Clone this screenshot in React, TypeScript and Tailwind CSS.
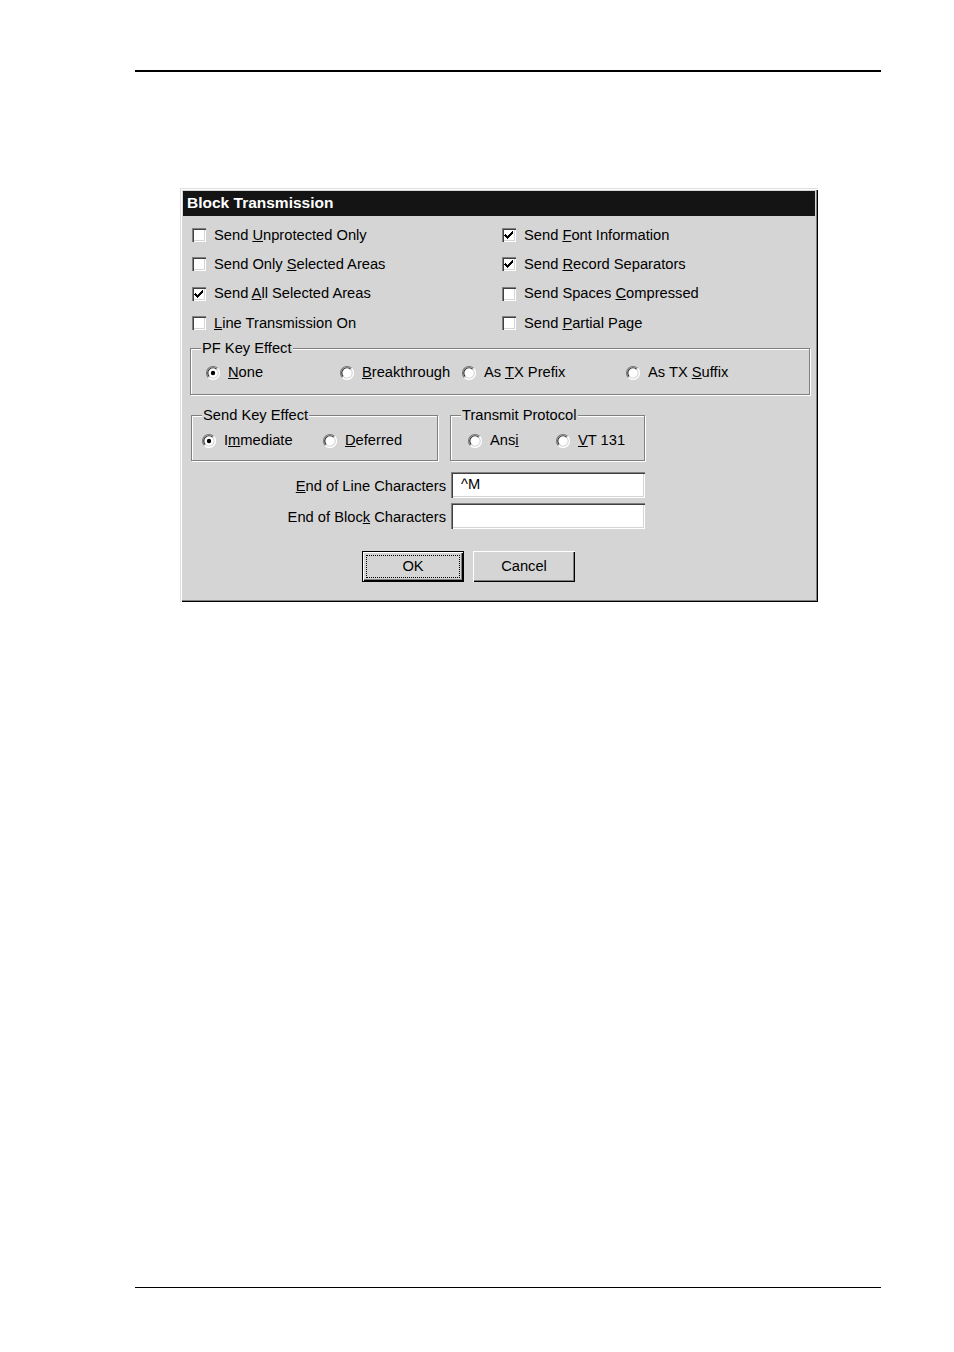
import React from "react";

function Check({ checked }: { checked?: boolean }) {
  return (
    <span className="relative inline-block w-[14px] h-[14px] shrink-0 bg-white shadow-[inset_1px_1px_#808080,inset_2px_2px_#404040,inset_-1px_-1px_#ffffff,inset_-2px_-2px_#d5d5d5]">
      {checked && (
        <svg className="absolute left-0 top-0" width="14" height="14" viewBox="0 0 14 14" shapeRendering="crispEdges">
          <path d="M3 6h1v1h1v1h1v-1h1v-1h1v-1h1v-1h1v-1h1v3h-1v1h-1v1h-1v1h-1v1h-1v1h-1v-1h-1v-1h-1v-1h-1z" fill="#000" />
        </svg>
      )}
    </span>
  );
}

function Radio({ checked }: { checked?: boolean }) {
  return (
    <svg width="14" height="14" viewBox="0 0 14 14" className="shrink-0">
      <circle cx="7" cy="7" r="6.5" fill="#ffffff" />
      <path d="M11.6 2.4 A6.5 6.5 0 0 0 2.4 11.6" stroke="#808080" strokeWidth="1.2" fill="none" />
      <path d="M10.7 3.3 A5.2 5.2 0 0 0 3.3 10.7" stroke="#303030" strokeWidth="1.2" fill="none" />
      <path d="M2.4 11.6 A6.5 6.5 0 0 0 11.6 2.4" stroke="#ffffff" strokeWidth="1.2" fill="none" />
      <path d="M3.3 10.7 A5.2 5.2 0 0 0 10.7 3.3" stroke="#d5d5d5" strokeWidth="1.2" fill="none" />
      {checked && <circle cx="7" cy="7" r="2.2" fill="#000" />}
    </svg>
  );
}

function CheckRow({ checked, children }: { checked?: boolean; children: React.ReactNode }) {
  return (
    <div className="flex items-center h-[29.3px] gap-[8px]">
      <Check checked={checked} />
      <span className="leading-none whitespace-nowrap">{children}</span>
    </div>
  );
}

function RadioItem({ checked, w, children }: { checked?: boolean; w?: string; children: React.ReactNode }) {
  return (
    <div className={"flex items-center gap-[8px] " + (w ?? "")}>
      <Radio checked={checked} />
      <span className="leading-none whitespace-nowrap">{children}</span>
    </div>
  );
}

function Group({ label, className, children }: { label: string; className: string; children: React.ReactNode }) {
  return (
    <div className={"relative border border-[#808080] shadow-[1px_1px_#ffffff,inset_1px_1px_#ffffff] " + className}>
      <span className="absolute left-[10px] top-[-9px] bg-[#d5d5d5] px-[1px] leading-[17px] whitespace-nowrap">{label}</span>
      {children}
    </div>
  );
}

export default function App() {
  return (
    <div className="w-[954px] h-[1352px] bg-white text-black font-['Liberation_Sans',Arial,sans-serif] text-[14.7px]">
      <div className="pt-[70px] pl-[135px]">
        <div className="w-[746px] h-[1.5px] bg-black" />
      </div>

      <div className="ml-[180px] mt-[116px] w-[638px] h-[414px] bg-[#d5d5d5] p-[3px] shadow-[inset_1px_1px_#dfdfdf,inset_2px_2px_#ffffff,inset_-1px_-1px_#000000,inset_-2px_-2px_#808080] flex flex-col">
        <div className="h-[25px] bg-[#141414] text-white font-bold text-[15.5px] pl-[4px] flex items-center leading-none">
          Block Transmission
        </div>

        <div className="pt-[5px] pl-[9px] flex">
          <div className="w-[310px] flex flex-col">
            <CheckRow>Send <u>U</u>nprotected Only</CheckRow>
            <CheckRow>Send Only <u>S</u>elected Areas</CheckRow>
            <CheckRow checked>Send <u>A</u>ll Selected Areas</CheckRow>
            <CheckRow><u>L</u>ine Transmission On</CheckRow>
          </div>
          <div className="flex flex-col">
            <CheckRow checked>Send <u>F</u>ont Information</CheckRow>
            <CheckRow checked>Send <u>R</u>ecord Separators</CheckRow>
            <CheckRow>Send Spaces <u>C</u>ompressed</CheckRow>
            <CheckRow>Send <u>P</u>artial Page</CheckRow>
          </div>
        </div>

        <Group label="PF Key Effect" className="ml-[7px] mt-[10px] w-[620px] h-[47px] pt-[14px] pl-[15px]">
          <div className="flex items-center h-[20px]">
            <RadioItem checked w="w-[134px]"><u>N</u>one</RadioItem>
            <RadioItem w="w-[122px]"><u>B</u>reakthrough</RadioItem>
            <RadioItem w="w-[164px]">As <u>T</u>X Prefix</RadioItem>
            <RadioItem>As TX <u>S</u>uffix</RadioItem>
          </div>
        </Group>

        <div className="flex mt-[20px] ml-[8px] gap-[12px]">
          <Group label="Send Key Effect" className="w-[247px] h-[46px] pt-[15px] pl-[10px]">
            <div className="flex items-center h-[20px]">
              <RadioItem checked w="w-[121px]">I<u>m</u>mediate</RadioItem>
              <RadioItem><u>D</u>eferred</RadioItem>
            </div>
          </Group>
          <Group label="Transmit Protocol" className="w-[195px] h-[46px] pt-[15px] pl-[17px]">
            <div className="flex items-center h-[20px]">
              <RadioItem w="w-[88px]">Ans<u>i</u></RadioItem>
              <RadioItem><u>V</u>T 131</RadioItem>
            </div>
          </Group>
        </div>

        <div className="mt-[11px] flex flex-col gap-[5px]">
          <div className="flex items-center">
            <span className="w-[263px] pt-[4px] text-right whitespace-nowrap leading-none"><u>E</u>nd of Line Characters</span>
            <div className="ml-[5px] w-[194px] h-[26px] bg-white pl-[10px] flex items-center leading-none shadow-[inset_1px_1px_#808080,inset_2px_2px_#404040,inset_-1px_-1px_#ffffff,inset_-2px_-2px_#d5d5d5]">
              ^M
            </div>
          </div>
          <div className="flex items-center">
            <span className="w-[263px] pt-[4px] text-right whitespace-nowrap leading-none">End of Bloc<u>k</u> Characters</span>
            <div className="ml-[5px] w-[194px] h-[26px] bg-white shadow-[inset_1px_1px_#808080,inset_2px_2px_#404040,inset_-1px_-1px_#ffffff,inset_-2px_-2px_#d5d5d5]" />
          </div>
        </div>

        <div className="mt-[22px] ml-[179px] flex gap-[9px]">
          <button className="w-[102px] h-[31px] border border-black bg-[#d5d5d5] p-[3px] shadow-[inset_1px_1px_#ffffff,inset_-1px_-1px_#000000,inset_-2px_-2px_#808080] flex">
            <span className="flex-1 border border-dotted border-black flex items-center justify-center leading-none">OK</span>
          </button>
          <button className="w-[102px] h-[31px] bg-[#d5d5d5] shadow-[inset_1px_1px_#ffffff,inset_-1px_-1px_#000000,inset_-2px_-2px_#808080] flex items-center justify-center leading-none">
            Cancel
          </button>
        </div>
      </div>

      <div className="mt-[685px] pl-[135px]">
        <div className="w-[746px] h-[1.5px] bg-black" />
      </div>
    </div>
  );
}
